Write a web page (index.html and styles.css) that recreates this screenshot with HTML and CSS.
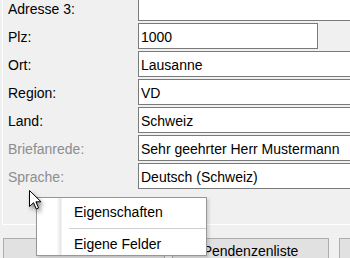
FILE: index.html
```
<!DOCTYPE html>
<html lang="de">
<head>
    <meta charset="UTF-8">
    <meta name="viewport" content="width=device-width, initial-scale=1.0">
    <title>Adresse</title>
    <link rel="stylesheet" href="styles.css">
</head>
<body>
    <div class="panel">
        <div class="form">
            <div class="row">
                <label class="label">Adresse 3:</label>
                <div class="field"></div>
            </div>
            <div class="row">
                <label class="label">Plz:</label>
                <div class="field field-short">1000</div>
            </div>
            <div class="row">
                <label class="label">Ort:</label>
                <div class="field">Lausanne</div>
            </div>
            <div class="row">
                <label class="label">Region:</label>
                <div class="field">VD</div>
            </div>
            <div class="row">
                <label class="label">Land:</label>
                <div class="field">Schweiz</div>
            </div>
            <div class="row">
                <label class="label disabled">Briefanrede:</label>
                <div class="field">Sehr geehrter Herr Mustermann</div>
            </div>
            <div class="row">
                <label class="label disabled">Sprache:</label>
                <div class="field">Deutsch (Schweiz)</div>
            </div>
        </div>
    </div>

    <div class="buttons">
        <div class="button btn-first"></div>
        <div class="button btn-second">Pendenzenliste</div>
        <div class="button btn-third"></div>
    </div>

    <div class="menu">
        <div class="menu-item">Eigenschaften</div>
        <div class="menu-sep"></div>
        <div class="menu-item">Eigene Felder</div>
    </div>

    <svg class="cursor" width="14" height="21" viewBox="0 0 14 21">
        <path d="M0.5,0.5 L0.5,16.5 L4.5,12.7 L7.3,19 L9.6,18 L6.9,11.8 L12,11.8 Z" fill="#fff" stroke="#000" stroke-width="1" stroke-linejoin="miter"/>
    </svg>
</body>
</html>
```

FILE: styles.css
```
html, body {
    margin: 0;
    padding: 0;
}
body {
    width: 350px;
    height: 258px;
    overflow: hidden;
    position: relative;
    background-color: #f0f0f0;
    font-family: 'Liberation Sans', Arial, sans-serif;
    font-size: 14px;
    color: #000;
}
.panel {
    margin-left: 2px;
    height: 225px;
    box-sizing: border-box;
    border-left: 1px solid #ffffff;
    border-bottom: 1px solid #ffffff;
    overflow: hidden;
}
.form {
    display: flex;
    flex-direction: column;
    gap: 2px;
    margin-top: -5px;
    padding-left: 5px;
}
.row {
    display: grid;
    grid-template-columns: 130px 1fr;
    height: 26px;
}
.label {
    display: flex;
    align-items: center;
    padding-top: 1px;
}
.label.disabled {
    color: #8d8d8d;
}
.field {
    background-color: #ffffff;
    border: 1px solid #7a7a7a;
    border-right: none;
    box-sizing: border-box;
    height: 26px;
    padding-left: 2px;
    display: flex;
    align-items: center;
    padding-top: 1px;
    margin-right: -10px;
    white-space: nowrap;
}
.field-short {
    width: 180px;
    border-right: 1px solid #7a7a7a;
    margin-right: 0;
}
.buttons {
    display: flex;
    margin-top: 13px;
    padding-left: 3px;
    height: 20px;
    overflow: hidden;
}
.button {
    height: 24px;
    box-sizing: border-box;
    background-color: #e1e1e1;
    border: 1px solid #adadad;
    border-bottom: none;
    text-align: center;
    padding-top: 5px;
    line-height: 14px;
    flex-shrink: 0;
}
.btn-first {
    width: 162px;
}
.btn-second {
    width: 157px;
    margin-left: 7px;
}
.btn-third {
    width: 100px;
    margin-left: 10px;
}
.menu {
    position: absolute;
    left: 36px;
    top: 197px;
    width: 171px;
    height: 59px;
    box-sizing: border-box;
    border: 1px solid #979797;
    background: linear-gradient(to right, #ffffff 0, #ffffff 20px, #f6f6f6 21px, #e6e6e6 24px, #ffffff 25px);
    padding-top: 1px;
    box-shadow: 2px 2px 3px rgba(0, 0, 0, 0.15);
}
.menu-item {
    height: 26px;
    line-height: 26px;
    padding-left: 37px;
}
.menu-sep {
    height: 1px;
    margin: 3px 0 2px 32px;
    background-color: #cfcfcf;
}
.cursor {
    position: absolute;
    left: 29px;
    top: 190px;
    filter: drop-shadow(2px 3px 2px rgba(0, 0, 0, 0.45));
}
```
